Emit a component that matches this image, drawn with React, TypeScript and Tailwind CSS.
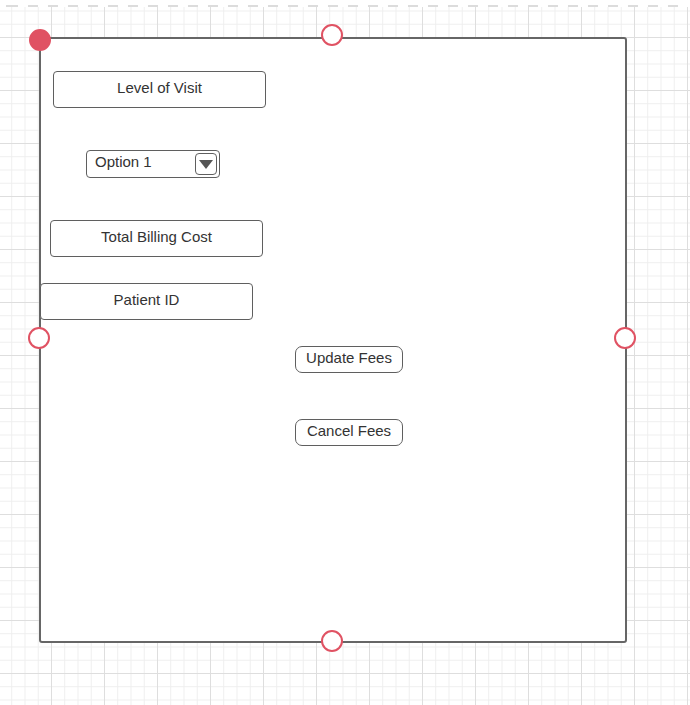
import React from 'react';

const font = "font-['Liberation_Sans',Arial,sans-serif]";

const LabelBox: React.FC<{ text: string; className?: string }> = ({ text, className = '' }) => (
  <div
    className={`w-[213px] h-[37px] flex items-center justify-center pb-[3px] bg-white border-[1.5px] border-[#5f5f5f] rounded-[4px] text-[15px] text-[#333] ${className}`}
  >
    {text}
  </div>
);

const FeeButton: React.FC<{ text: string; className?: string }> = ({ text, className = '' }) => (
  <button
    className={`w-[108px] h-[27px] flex items-center justify-center pb-[3px] bg-white border-[1.5px] border-[#5f5f5f] rounded-[7px] text-[15px] text-[#333] ${className}`}
  >
    {text}
  </button>
);

const Handle: React.FC<{ className: string; filled?: boolean }> = ({ className, filled }) => (
  <div
    className={`absolute w-[22px] h-[22px] rounded-full border-[2.5px] border-[#e05263] ${filled ? 'bg-[#e05263]' : 'bg-white'} ${className}`}
  />
);

export default function App() {
  return (
    <div
      className={`${font} w-[690px] h-[705px] overflow-hidden bg-white bg-[linear-gradient(to_right,#dedede_1px,transparent_1px),linear-gradient(to_bottom,#dedede_1px,transparent_1px),linear-gradient(to_right,#eeeeee_1px,transparent_1px),linear-gradient(to_bottom,#eeeeee_1px,transparent_1px)] bg-[size:53px_53px,53px_53px,13.25px_13.25px,13.25px_13.25px] bg-[position:51px_37px]`}
    >
      {/* top ruler */}
      <div className="pt-[5px] bg-white">
        <div className="h-[2px] w-[682px] bg-[repeating-linear-gradient(to_right,#dcdcdc_0_10px,transparent_10px_20px)] bg-[position:8px_0]" />
      </div>

      {/* frame */}
      <div className="relative ml-[39px] mt-[30px] w-[588px] h-[606px] bg-white border-2 border-[#666] rounded-[3px]">
        <div className="flex flex-col items-start">
          <LabelBox text="Level of Visit" className="ml-[12px] mt-[32px]" />

          <div className="ml-[45px] mt-[42px] w-[134px] h-[28px] flex items-center justify-between pl-[8px] pr-[2px] bg-white border-[1.5px] border-[#5f5f5f] rounded-[4px] text-[15px] text-[#333]">
            <span className="pb-[4px]">Option 1</span>
            <div className="w-[22px] h-[22px] flex items-center justify-center border-[1.5px] border-[#5f5f5f] rounded-[4px]">
              <svg width="14" height="9" viewBox="0 0 14 9">
                <path d="M0 0 L14 0 L7 9 Z" fill="#555" />
              </svg>
            </div>
          </div>

          <LabelBox text="Total Billing Cost" className="ml-[9px] mt-[42px]" />
          <LabelBox text="Patient ID" className="-ml-[1px] mt-[26px] relative" />

          <FeeButton text="Update Fees" className="ml-[254px] mt-[26px]" />
          <FeeButton text="Cancel Fees" className="ml-[254px] mt-[46px]" />
        </div>

        <Handle filled className="-left-[12px] -top-[10px]" />
        <Handle className="left-[280px] -top-[15px]" />
        <Handle className="-left-[13px] top-[288px]" />
        <Handle className="left-[573px] top-[288px]" />
        <Handle className="left-[280px] top-[591px]" />
      </div>
    </div>
  );
}
